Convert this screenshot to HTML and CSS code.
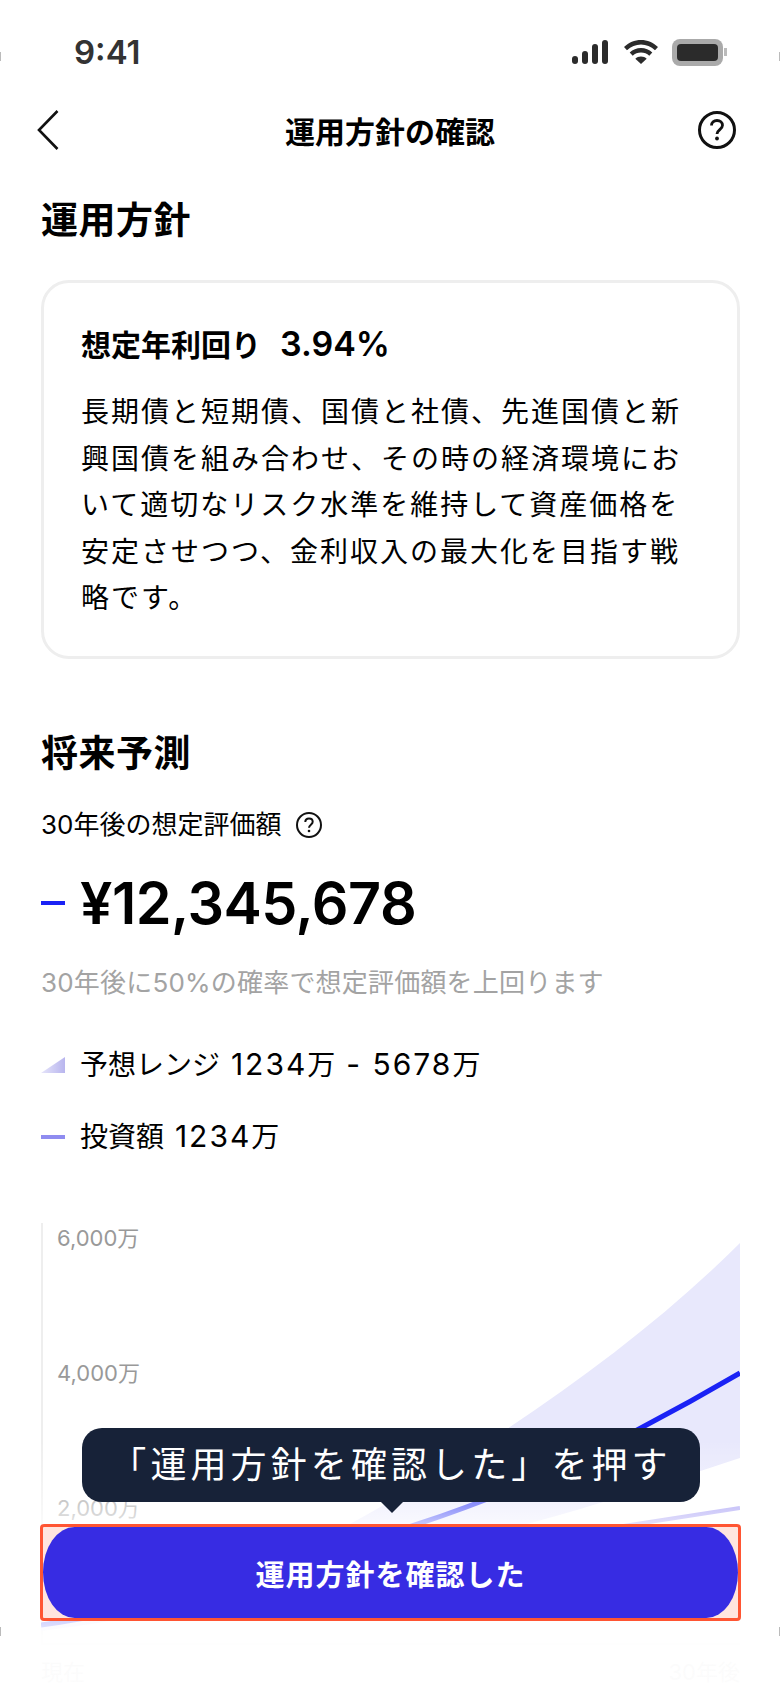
FILE: index.html
```html
<!DOCTYPE html>
<html lang="ja">
<head>
    <meta charset="UTF-8">
    <meta name="viewport" content="width=device-width, initial-scale=1.0">
    <title>運用方針の確認</title>
    <link rel="stylesheet" href="styles.css">
</head>
<body>
    <div class="phone">
        <!-- ステータスバー -->
        <div class="status-bar">
            <span class="time">9:41</span>
            <div class="status-icons">
                <svg class="signal" width="36" height="24" viewBox="0 0 36 24" fill="#2b2b2b">
                    <rect x="0" y="16" width="6" height="8" rx="3"/>
                    <rect x="10" y="11" width="6" height="13" rx="3"/>
                    <rect x="20" y="4" width="6" height="20" rx="3"/>
                    <rect x="30" y="0" width="6" height="24" rx="3"/>
                </svg>
                <svg class="wifi" width="34" height="24" viewBox="0 0 34 24" fill="#2b2b2b">
                    <path d="M17 0C10.500 0 4.800 2.600 0 7l3 3.300C7 6.700 11.800 4.600 17 4.600s10 2.100 14 5.700L34 7C29.200 2.600 23.500 0 17 0z"/>
                    <path d="M17 8c-4.400 0-8.200 1.700-11.300 4.500l3 3.200C11 13.600 13.800 12.500 17 12.500s6 1.100 8.300 3.200l3-3.200C25.200 9.700 21.400 8 17 8z"/>
                    <path d="M17 16.500c-2.200 0-4.200.8-5.700 2.200L17 24l5.700-5.300c-1.500-1.400-3.500-2.200-5.700-2.200z"/>
                </svg>
                <div class="battery"><div class="battery-level"></div></div>
                <div class="battery-nub"></div>
            </div>
        </div>

        <!-- ヘッダー -->
        <div class="nav-bar">
            <svg class="nav-back" width="22" height="40" viewBox="0 0 22 40" fill="none" stroke="#111" stroke-width="2.600">
                <path d="M20.500 1L2 20l18.500 19"/>
            </svg>
            <span class="nav-title">運用方針の確認</span>
            <svg width="40" height="40" viewBox="0 0 40 40" fill="none" stroke="#111" stroke-width="3">
                <circle cx="20" cy="20" r="17.500"/>
                <path d="M14.500 15.500c0-3.200 2.400-5 5.500-5s5.500 1.900 5.500 4.800c0 4.200-5.500 4.400-5.500 8.700" stroke-width="2.800"/>
                <circle cx="20" cy="28.500" r="1.900" fill="#111" stroke="none"/>
            </svg>
        </div>

        <div class="content">
            <h2 class="section-title">運用方針</h2>
            <div class="policy-card">
                <div class="yield-row">
                    <span class="yield-label">想定年利回り</span>
                    <span class="yield-value">3.94%</span>
                </div>
                <p class="policy-text">長期債と短期債、国債と社債、先進国債と新興国債を組み合わせ、その時の経済環境において適切なリスク水準を維持して資産価格を安定させつつ、金利収入の最大化を目指す戦略です。</p>
            </div>

            <h2 class="section-title forecast-title">将来予測</h2>
            <div class="estimate-label">
                <span>30年後の想定評価額</span>
                <svg width="28" height="28" viewBox="0 0 28 28" fill="none" stroke="#111" stroke-width="2">
                    <circle cx="14" cy="14" r="12"/>
                    <path d="M10.300 11c0-2.200 1.600-3.500 3.700-3.500s3.700 1.300 3.700 3.300c0 2.900-3.700 3-3.700 6" />
                    <circle cx="14" cy="20" r="1.300" fill="#111" stroke="none"/>
                </svg>
            </div>
            <div class="amount-row">
                <span class="dash dash-blue"></span>
                <span class="amount">¥12,345,678</span>
            </div>
            <p class="note">30年後に50%の確率で想定評価額を上回ります</p>
            <div class="legend-row range-row">
                <svg class="legend-icon" width="24" height="16" viewBox="0 0 24 16">
                    <defs>
                        <linearGradient id="rangeFill" x1="0" x2="1" y1="0" y2="0">
                            <stop offset="0" stop-color="#e6e5fa"/>
                            <stop offset="1" stop-color="#b8b5ee"/>
                        </linearGradient>
                    </defs>
                    <path d="M0 16L24 0v16z" fill="url(#rangeFill)"/>
                </svg>
                <span>予想レンジ <span class="num">1234</span>万 <span class="num">- 5678</span>万</span>
            </div>
            <div class="legend-row">
                <span class="dash dash-light"></span>
                <span>投資額 <span class="num">1234</span>万</span>
            </div>

            <!-- グラフ -->
            <div class="chart">
                <svg class="chart-lines" width="699" height="420" viewBox="0 0 699 420">
                    <path d="M0 404C100 389 200 359 309 301C440 229 590 129 699 20V235C620 261 560 281 486 301C320 349 150 389 0 408z" fill="#e8e8fc"/>
                    <path d="M0 402C130 384 260 339 377 301C440 280 520 249 598 206C640 184 670 167 699 150" fill="none" stroke="#1a22f5" stroke-width="5"/>
                    <path d="M0 393L699 285" fill="none" stroke="#8f85f2" stroke-width="4"/>
                </svg>
                <span class="y-label y-6000">6,000万</span>
                <span class="y-label y-4000">4,000万</span>
                <span class="y-label y-2000">2,000万</span>
                <div class="x-labels"><span>現在</span><span>30年後</span></div>
            </div>
        </div>

        <div class="fade"></div>

        <!-- 吹き出しとボタン -->
        <div class="tooltip">「運用方針を確認した」を押す</div>
        <div class="highlight">
            <button type="button" class="confirm-btn">運用方針を確認した</button>
        </div>

        <span class="edge edge-tl"></span>
        <span class="edge edge-tr"></span>
        <span class="edge edge-bl"></span>
        <span class="edge edge-br"></span>
    </div>
</body>
</html>
```

FILE: styles.css
```css
* {
    box-sizing: border-box;
}
body {
    margin: 0;
    background-color: #fff;
    font-family: Inter, "Noto Sans CJK JP", sans-serif;
    color: #000;
}
.phone {
    position: relative;
    width: 780px;
    height: 1688px;
    overflow: hidden;
}

/* ステータスバー */
.status-bar {
    display: flex;
    justify-content: space-between;
    align-items: center;
    height: 104px;
    padding: 0 53px 0 74px;
}
.time {
    font-size: 33px;
    font-weight: 600;
    color: #333;
}
.status-icons {
    display: flex;
    align-items: center;
}
.signal {
    margin-right: 16px;
}
.wifi {
    margin-right: 14px;
}
.battery {
    width: 51px;
    height: 27px;
    padding: 5px;
    border-radius: 8px;
    background-color: #aaa;
}
.battery-level {
    height: 100%;
    border-radius: 4px;
    background-color: #2b2b2b;
}
.battery-nub {
    width: 3px;
    height: 8px;
    margin-left: 1px;
    background-color: #bbb;
}

/* ヘッダー */
.nav-bar {
    display: flex;
    align-items: center;
    height: 52px;
    padding: 0 43px 0 37px;
}
.nav-back {
    margin-right: 24px;
}
.nav-title {
    flex: 1;
    font-size: 30px;
    font-weight: 700;
    text-align: center;
}

.content {
    padding: 0 40px 0 41px;
}
.section-title {
    margin: 39px 0 0;
    font-size: 37px;
    line-height: 52px;
    font-weight: 700;
    letter-spacing: 0.500px;
}
.policy-card {
    height: 379px;
    margin-top: 33px;
    padding: 38px 37px 0;
    border: 3px solid #eee;
    border-radius: 28px;
}
.yield-row {
    display: flex;
    align-items: center;
    gap: 19px;
    height: 44px;
}
.yield-label {
    font-size: 30px;
    font-weight: 600;
}
.yield-value {
    font-size: 34px;
    font-weight: 600;
}
.policy-text {
    margin: 24px 0 0;
    font-size: 28px;
    line-height: 46.500px;
    letter-spacing: 2px;
}
.forecast-title {
    margin-top: 69px;
}
.estimate-label {
    display: flex;
    align-items: center;
    gap: 14px;
    margin-top: 25px;
    font-size: 26px;
    line-height: 40px;
}
.amount-row {
    display: flex;
    align-items: center;
    gap: 15px;
    margin-top: 23px;
}
.amount {
    font-size: 57.500px;
    line-height: 70px;
    font-weight: 600;
    letter-spacing: -0.500px;
}
.dash {
    width: 24px;
    height: 4px;
}
.dash-blue {
    background-color: #1a22f5;
}
.dash-light {
    background-color: #8f8cf0;
}
.note {
    margin: 27px 0 0;
    font-size: 26px;
    line-height: 36px;
    letter-spacing: 0.200px;
    color: #a3a3a3;
}
.legend-row {
    display: flex;
    align-items: center;
    gap: 15px;
    margin-top: 31px;
    font-size: 28px;
    line-height: 40px;
}
.range-row {
    margin-top: 43px;
}
.legend-icon {
    flex: none;
}
.num {
    margin-left: 3px;
    font-size: 30px;
    letter-spacing: 2px;
}

/* グラフ */
.chart {
    position: relative;
    height: 422px;
    margin-top: 66px;
    border-left: 2px solid #eee;
    border-bottom: 2px solid #eee;
}
.chart-lines {
    position: absolute;
    left: -2px;
    top: 0;
}
.y-label {
    position: absolute;
    left: 14px;
    font-size: 22px;
    line-height: 26px;
    color: #999;
}
.y-6000 {
    top: 2px;
}
.y-4000 {
    top: 137px;
}
.y-2000 {
    top: 272px;
}
.x-labels {
    position: absolute;
    left: -2px;
    right: 0;
    top: 100%;
    display: flex;
    justify-content: space-between;
    margin-top: 14px;
    font-size: 22px;
    line-height: 30px;
    color: #999;
}

/* 下部のフェード */
.fade {
    position: absolute;
    left: 0;
    right: 0;
    top: 1440px;
    bottom: 0;
    background: linear-gradient(to bottom,
        rgba(255, 255, 255, 0) 0,
        rgba(255, 255, 255, 0.5) 65px,
        rgba(255, 255, 255, 0.75) 85px,
        rgba(255, 255, 255, 0.8) 180px,
        rgba(255, 255, 255, 0.96) 200px,
        rgba(255, 255, 255, 0.97) 248px);
}

/* 吹き出し */
.tooltip {
    position: absolute;
    left: 82px;
    top: 1428px;
    width: 618px;
    height: 74px;
    border-radius: 20px;
    background-color: #172238;
    color: #fff;
    font-size: 36px;
    line-height: 74px;
    letter-spacing: 4.100px;
    text-align: center;
}
.tooltip::after {
    content: "";
    position: absolute;
    left: 299px;
    top: 74px;
    border-left: 11px solid transparent;
    border-right: 11px solid transparent;
    border-top: 11px solid #172238;
}
.highlight {
    position: absolute;
    left: 40px;
    top: 1524px;
    width: 701px;
    height: 97px;
    border: 3px solid #ff5533;
    border-radius: 4px;
    background-color: #ffe5df;
}
.confirm-btn {
    display: block;
    width: 100%;
    height: 100%;
    padding: 0;
    border: none;
    border-radius: 32px / 46px;
    background-color: #372ce3;
    color: #fff;
    font-family: inherit;
    font-size: 29px;
    font-weight: 600;
    letter-spacing: 1px;
}

/* 端の小さな印 */
.edge {
    position: absolute;
    width: 1px;
    height: 9px;
    background-color: #bbb;
}
.edge-tl {
    left: 0;
    top: 52px;
}
.edge-tr {
    right: 0;
    top: 52px;
}
.edge-bl {
    left: 0;
    top: 1627px;
}
.edge-br {
    right: 0;
    top: 1627px;
}
```
